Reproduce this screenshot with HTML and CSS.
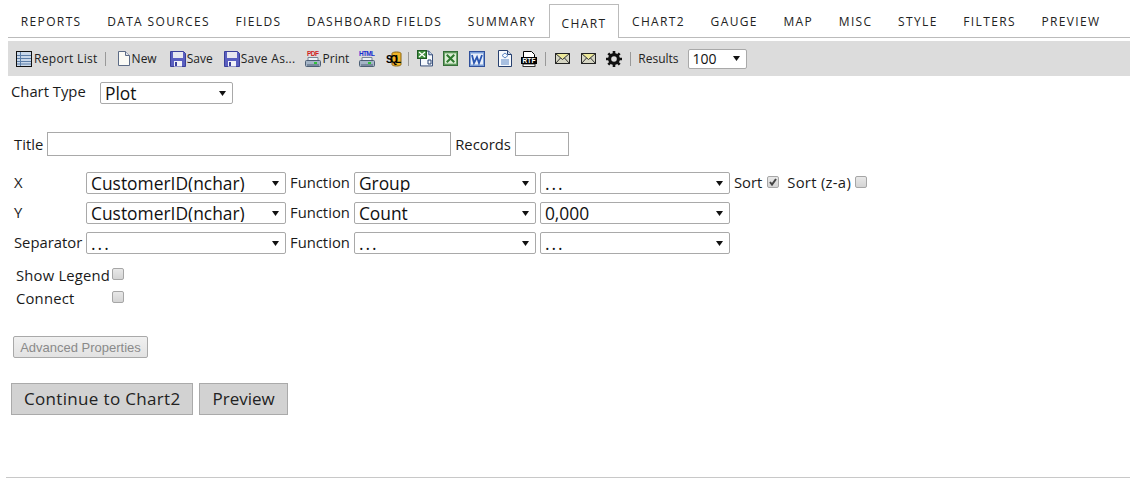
FILE: index.html
```html
<!DOCTYPE html>
<html lang="en">
<head>
<meta charset="utf-8">
<title>Chart</title>
<link rel="stylesheet" href="styles.css">
</head>
<body>
<svg class="defs" width="0" height="0" aria-hidden="true">
  <defs>
    <symbol id="floppy" viewBox="0 0 16 16">
      <path d="M.5.5h13l2 2v13H.5z" fill="#5a5fc0" stroke="#3a3f9a"/>
      <rect x="3" y="1" width="10" height="6" fill="#e8e8f0"/>
      <rect x="4" y="10" width="8" height="5.5" fill="#f2f2f8"/>
      <rect x="5" y="11" width="2" height="4" fill="#3a3f9a"/>
    </symbol>
    <symbol id="printer" viewBox="0 0 16 10">
      <path d="M3 .5h10v3H3z" fill="#eef2f6" stroke="#7a8796"/>
      <rect x=".5" y="3.5" width="15" height="6" rx="1" fill="#a4b4c6" stroke="#4c5e74"/>
      <rect x="9" y="5" width="3" height="2" fill="#2fc23a"/>
      <rect x="2" y="7.500" width="12" height="1" fill="#4c5e74"/>
    </symbol>
    <symbol id="mail" viewBox="0 0 15 11">
      <rect x=".5" y=".5" width="14" height="10" fill="#d6d6c4" stroke="#222"/>
      <path d="M1 1 7.500 6 14 1z" fill="#ece89a"/>
      <path d="M.5.500 7.500 6.500 14.500.5M.5 10.500 5.500 5M14.500 10.500 9.500 5" fill="none" stroke="#333"/>
    </symbol>
    <symbol id="page" viewBox="0 0 14 17">
      <path d="M.5.5h9l4 4v12H.5z" fill="#f6f9fd" stroke="#27406f"/>
      <path d="M9.500.5v4h4" fill="#c9d6ea" stroke="#27406f"/>
    </symbol>
  </defs>
</svg>

<nav class="tabs">
  <a class="tab">Reports</a>
  <a class="tab">Data Sources</a>
  <a class="tab">Fields</a>
  <a class="tab">Dashboard Fields</a>
  <a class="tab">Summary</a>
  <a class="tab tab-active">Chart</a>
  <a class="tab">Chart2</a>
  <a class="tab">Gauge</a>
  <a class="tab">Map</a>
  <a class="tab">Misc</a>
  <a class="tab">Style</a>
  <a class="tab">Filters</a>
  <a class="tab">Preview</a>
</nav>

<div class="toolbar">
  <span class="tool tool-list">
    <svg class="ic ic-list" viewBox="0 0 16 16"><rect x=".5" y=".5" width="15" height="15" fill="#c9d8ea" stroke="#111"/><path d="M1 4.500h14M1 7.500h14M1 10.500h14M1 13h14M4.500 1v14" stroke="#5c7ea8" fill="none"/></svg>Report List
  </span>
  <i class="sep sep-a"></i>
  <span class="tool tool-new">
    <svg class="ic ic-new" viewBox="0 0 12 15"><path d="M.5.5h7l4 4v10H.5z" fill="#fbfbf6" stroke="#5c6b86"/><path d="M7.500.5v4h4" fill="#dfe3ea" stroke="#5c6b86"/></svg>New
  </span>
  <span class="tool tool-save"><svg class="ic ic-16"><use href="#floppy"/></svg>Save</span>
  <span class="tool tool-saveas"><svg class="ic ic-16"><use href="#floppy"/></svg>Save As...</span>
  <span class="tool tool-print">
    <svg class="ic ic-print" viewBox="0 0 16 17"><text x="2" y="6" class="ic-txt ic-red" textLength="12">PDF</text><use href="#printer" x="0" y="7" width="16" height="10"/></svg>Print
  </span>
  <svg class="ic ic-print ic-html" viewBox="0 0 16 17"><text x="0" y="6" class="ic-txt ic-blue" textLength="16">HTML</text><use href="#printer" x="0" y="7" width="16" height="10"/></svg>
  <svg class="ic ic-sql" viewBox="0 0 16 16"><path d="M6 2.500C6 .5 15 .5 15 2.500v11C15 15.500 6 15.500 6 13.500z" fill="#f0b428" stroke="#8a6410"/><text x="0" y="12" class="ic-sqltxt" textLength="15">SQL</text></svg>
  <i class="sep sep-b"></i>
  <svg class="ic ic-xls1" viewBox="0 0 16 17"><use href="#page" x="3" y="0" width="13" height="17"/><rect x=".5" y=".5" width="9" height="8" fill="#3f8f3f" stroke="#1f5a25"/><path d="M2 2l6 5M8 2l-6 5" stroke="#fff" stroke-width="1.300"/><path d="M11 10h3v4h-3z" fill="none" stroke="#27406f"/></svg>
  <svg class="ic ic-xls2" viewBox="0 0 16 16"><rect x=".5" y=".5" width="15" height="15" fill="#5f9a5c" stroke="#2f6a33"/><rect x="2" y="2.500" width="12" height="11" fill="#dceed6"/><path d="M4 4l8 8M12 4l-8 8" stroke="#2f7a2f" stroke-width="2.200"/></svg>
  <svg class="ic ic-word" viewBox="0 0 16 16"><rect x=".5" y=".5" width="15" height="15" fill="#7b9fd8" stroke="#2f4f9a"/><rect x="2" y="2.500" width="12" height="11" fill="#e9effa"/><path d="M3 4l2 8 3-6 2 6 3-8" fill="none" stroke="#2a56b0" stroke-width="1.800"/></svg>
  <svg class="ic ic-doc" viewBox="0 0 14 17"><use href="#page"/><path d="M7 3 4 5.500 7 8l3-2.500zM3 10h8M3 12h8M3 14h8" fill="none" stroke="#5b86c4"/></svg>
  <svg class="ic ic-rtf" viewBox="0 0 16 16"><path d="M2.500.5h8l3 3v3h-11z" fill="#fff" stroke="#000"/><rect x="0" y="6" width="16" height="7" fill="#000"/><rect x="2" y="13" width="12" height="2.500" fill="#fff" stroke="#000" stroke-width=".8"/><text x="1.500" y="12" class="ic-rtftxt" textLength="13">RTF</text></svg>
  <i class="sep sep-c"></i>
  <svg class="ic ic-mail"><use href="#mail"/></svg>
  <svg class="ic ic-mail ic-mail2"><use href="#mail"/></svg>
  <svg class="ic ic-gear" viewBox="0 0 16 16"><circle cx="8" cy="8" r="4.500" fill="none" stroke="#111" stroke-width="3"/><path d="M8 0v16M0 8h16M2.300 2.300l11.400 11.400M13.700 2.300 2.300 13.700" stroke="#111" stroke-width="2.600"/><circle cx="8" cy="8" r="2.800" fill="#dcdcdc"/></svg>
  <i class="sep sep-d"></i>
  <label class="results">Results
    <select class="sel sel-results"><option>100</option></select>
  </label>
</div>

<div class="chart-type">
  <span>Chart Type</span>
  <select class="sel sel-type"><option>Plot</option></select>
</div>

<form class="form">
  <div class="title-row">
    <span>Title</span>
    <input class="txt txt-title" type="text">
    <span>Records</span>
    <input class="txt txt-records" type="text">
  </div>

  <div class="axes">
    <div class="axis">
      <span class="axis-name">X</span>
      <select class="sel sel-field"><option>CustomerID(nchar)</option></select>
      <span class="lbl">Function</span>
      <select class="sel sel-fn"><option>Group</option></select>
      <select class="sel sel-fmt sel-dots"><option>...</option></select>
      <span class="lbl">Sort</span>
      <input class="chk chk-on" type="checkbox" checked>
      <span class="lbl sort-za">Sort (z-a)</span>
      <input class="chk" type="checkbox">
    </div>
    <div class="axis">
      <span class="axis-name">Y</span>
      <select class="sel sel-field"><option>CustomerID(nchar)</option></select>
      <span class="lbl">Function</span>
      <select class="sel sel-fn"><option>Count</option></select>
      <select class="sel sel-fmt"><option>0,000</option></select>
    </div>
    <div class="axis">
      <span class="axis-name">Separator</span>
      <select class="sel sel-field sel-dots"><option>...</option></select>
      <span class="lbl">Function</span>
      <select class="sel sel-fn sel-dots"><option>...</option></select>
      <select class="sel sel-fmt sel-dots"><option>...</option></select>
    </div>
  </div>

  <div class="opts">
    <div class="opt"><span class="opt-name">Show Legend</span><input class="chk" type="checkbox"></div>
    <div class="opt"><span class="opt-name">Connect</span><input class="chk" type="checkbox"></div>
  </div>

  <button class="btn-adv" type="button">Advanced Properties</button>

  <div class="actions">
    <button class="btn" type="button">Continue to Chart2</button>
    <button class="btn btn-preview" type="button">Preview</button>
  </div>
</form>

<div class="rule"></div>
</body>
</html>
```
FILE: styles.css
```css
* { box-sizing: border-box; }
html, body { height: 100%; }
body {
  margin: 0;
  overflow: hidden;
  font-family: "Open Sans", "Noto Sans", sans-serif;
  font-size: 14.8px;
  color: #1a1a1a;
  background: #fff;
}
.defs { position: absolute; }

.tabs {
  display: flex;
  align-items: flex-start;
  height: 38px;
  margin-left: 8px;
  padding-top: 4px;
  border-bottom: 1px solid #bbb;
}
.tab {
  display: flex;
  align-items: center;
  height: 33px;
  padding: 1px 12.8px 0;
  font-family: "Open Sans", sans-serif;
  font-size: 12px;
  letter-spacing: 1.36px;
  text-transform: uppercase;
  color: #222;
}
.tab-active {
  height: 34px;
  padding: 3px 11.8px 0;
  background: #fff;
  border: 1px solid #bbb;
  border-bottom: 0;
}

.toolbar {
  display: flex;
  align-items: center;
  height: 35px;
  margin: 3px 0 0 8px;
  background: #dcdcdc;
  font-size: 12px;
  color: #222;
}
.tool { display: inline-flex; align-items: center; }
.tool-list { letter-spacing: .3px; }
.ic { display: block; flex: none; }
.ic-list { width: 16px; height: 16px; margin: 0 2px 0 8px; }
.ic-new { width: 12px; height: 15px; margin: 0 2px 0 0; }
.ic-16 { width: 16px; height: 16px; margin-right: 1px; }
.ic-print { width: 16px; height: 17px; margin-right: 2px; }
.ic-html { margin: 0 0 0 10px; }
.ic-sql { width: 16px; height: 16px; margin-left: 11px; }
.ic-xls1 { width: 16px; height: 17px; margin-left: 8px; }
.ic-xls2 { width: 15px; height: 15px; margin-left: 10px; }
.ic-word { width: 16px; height: 16px; margin-left: 11px; }
.ic-doc { width: 14px; height: 17px; margin-left: 13px; }
.ic-rtf { width: 16px; height: 16px; margin-left: 9px; }
.ic-mail { width: 15px; height: 11px; margin-left: 9px; }
.ic-mail2 { margin-left: 11px; }
.ic-gear { width: 16px; height: 16px; margin-left: 10px; }
.ic-txt { font: bold 6.500px "Liberation Sans", sans-serif; }
.ic-red { fill: #d02020; }
.ic-blue { fill: #1a2fd0; }
.ic-sqltxt { font: bold 10px "Liberation Sans", sans-serif; fill: #000; }
.ic-rtftxt { font: bold 6.500px "Liberation Sans", sans-serif; fill: #fff; }

.sep { display: block; width: 1px; height: 14px; background: #999; flex: none; }
.sep-a { margin: 0 12px 0 7px; }
.tool-save { margin-left: 13px; }
.tool-saveas { margin-left: 11px; letter-spacing: .3px; }
.tool-print { margin-left: 9px; }
.sep-b { margin-left: 6px; }
.sep-c { margin-left: 8px; }
.sep-d { margin-left: 8px; }
.results { display: inline-flex; align-items: center; margin-left: 7px; }

.sel {
  appearance: none;
  display: block;
  height: 22px;
  padding: 0 0 0 4px;
  line-height: 18px;
  border: 1px solid #a9a9a9;
  border-radius: 2px;
  background: #fff url("data:image/svg+xml,%3Csvg xmlns='http://www.w3.org/2000/svg' width='7' height='5'%3E%3Cpath d='M0 0h7L3.500 5z' fill='%23111'/%3E%3C/svg%3E") no-repeat right 6px center;
  font-family: "Open Sans", sans-serif;
  font-size: 17.4px;
  color: #111;
}
.sel-dots { letter-spacing: 2px; }
.sel-results { width: 59px; height: 20px; margin-left: 9px; font-size: 14px; }
.sel-type { width: 133px; margin-left: 14px; }
.sel-field { width: 200px; }
.sel-fn { width: 182px; }
.sel-fmt { width: 190px; }

.chart-type {
  display: flex;
  align-items: flex-start;
  height: 22px;
  margin: 6px 0 0 11px;
}
.chart-type span { line-height: 18px; width: 75px; }

.form { margin-left: 14px; }
.title-row {
  display: flex;
  align-items: center;
  gap: 4px;
  margin-top: 28px;
}
.txt {
  display: block;
  height: 24px;
  padding: 0;
  border: 1px solid #a9a9a9;
  background: #fff;
}
.txt-title { width: 404px; }
.txt-records { width: 54px; }

.axes { display: flex; flex-direction: column; gap: 8px; margin-top: 16px; }
.axis { display: flex; align-items: center; gap: 4px; height: 22px; }
.axis-name { width: 68px; flex: none; margin-bottom: 2px; }
.lbl { margin-bottom: 2px; }
.chk {
  appearance: none;
  display: block;
  flex: none;
  width: 12px;
  height: 12px;
  margin: 0;
  border: 1px solid #a6a6a6;
  border-radius: 2px;
  background: linear-gradient(#e8e8e8, #d4d4d4);
}
.chk-on {
  background: url("data:image/svg+xml,%3Csvg xmlns='http://www.w3.org/2000/svg' width='10' height='10'%3E%3Cpath d='M2 5l2 2.500L8 2' fill='none' stroke='%23444' stroke-width='2'/%3E%3C/svg%3E") no-repeat center, linear-gradient(#e8e8e8, #d4d4d4);
}
.sort-za { margin-left: 4px; letter-spacing: .3px; }
.axis .chk { margin-top: -2px; }
.axis .chk-on { margin-left: 1px; }

.opts { margin: 10px 0 0 2px; }
.opt { display: flex; align-items: center; height: 23px; }
.opt-name { width: 96px; flex: none; margin-bottom: 2px; letter-spacing: .2px; }
.opt .chk { margin-top: -4px; }

.btn-adv {
  display: block;
  width: 135px;
  height: 22px;
  margin: 26px 0 0 -1px;
  padding: 0;
  border: 1px solid #a9a9a9;
  border-radius: 2px;
  background: linear-gradient(#f0f0f0, #e2e2e2);
  font-family: "Liberation Sans", sans-serif;
  font-size: 13px;
  color: #8a8a8a;
}
.actions { display: flex; gap: 6px; margin: 25px 0 0 -3px; }
.btn {
  display: block;
  height: 32px;
  padding: 0 12px 2px;
  border: 1px solid #aaa;
  background: #d2d2d2;
  font-family: "Open Sans", sans-serif;
  font-size: 17px;
  letter-spacing: .33px;
  color: #222;
}
.btn-preview { padding: 0 12px 2px; letter-spacing: 0; }
.rule {
  height: 1px;
  margin: 62px 0 0 6px;
  background: #c8c8c8;
}
```
